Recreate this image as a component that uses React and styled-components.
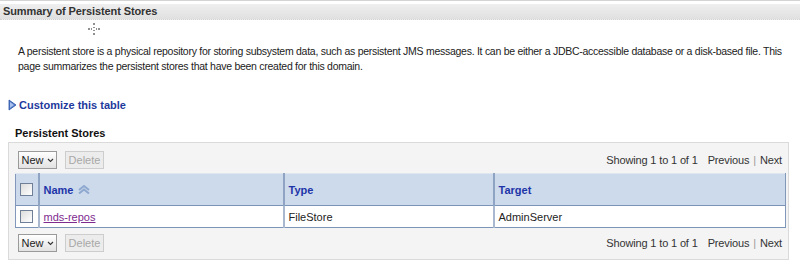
import React from "react";
import styled, { createGlobalStyle } from "styled-components";

const GlobalStyle = createGlobalStyle`
  body {
    margin: 0;
    background: #fff;
    font-family: "Liberation Sans", Arial, sans-serif;
    font-size: 11px;
    color: #333;
  }
`;

const Page = styled.div`
  position: relative;
  width: 800px;
  height: 278px;
  border-top: 1px solid #d4d4d4;
  box-sizing: border-box;
`;

const TitleBar = styled.div`
  margin-top: 3px;
  height: 15px;
  line-height: 15px;
  padding-left: 3px;
  background: linear-gradient(#efefef, #e0e0e0);
  border-bottom: 1px dotted #d3d3d3;
  font-weight: bold;
  font-size: 11px;
  letter-spacing: -0.1px;
  color: #333;
`;

const Cursor = styled.svg`
  position: absolute;
  left: 87px;
  top: 21px;
`;

const Description = styled.p`
  margin: 24px 14px 0 18px;
  line-height: 15px;
  font-size: 10.5px;
  letter-spacing: -0.27px;
  color: #222;
`;

const CustomizeLink = styled.a`
  display: flex;
  align-items: center;
  gap: 2px;
  margin: 24px 0 0 8px;
  height: 14px;
  font-weight: bold;
  font-size: 11px;
  color: #1d3a9c;
  text-decoration: none;
`;

const SectionTitle = styled.h3`
  margin: 14px 0 0 15px;
  height: 14px;
  line-height: 14px;
  font-size: 11px;
  font-weight: bold;
  color: #111;
`;

const Panel = styled.div`
  margin: 2px 11px 0 8px;
  border: 1px solid #dadada;
  background: #f4f4f4;
  padding: 8px 0 7px;
`;

const Toolbar = styled.div`
  display: flex;
  align-items: center;
  gap: 8px;
  padding: 0 6px 0 9px;
  margin: ${(p) => (p.$bottom ? "6px 0 0" : "0 0 4px")};
  height: 18px;
`;

const Button = styled.button`
  display: flex;
  align-items: center;
  justify-content: center;
  gap: 3px;
  width: 39px;
  height: 18px;
  padding: 0;
  font-family: inherit;
  font-size: 11px;
  border: 1px solid ${(p) => (p.disabled ? "#cdcdcd" : "#9a9a9a")};
  background: ${(p) =>
    p.disabled ? "#ececec" : "linear-gradient(#ffffff, #e2e2e2)"};
  color: ${(p) => (p.disabled ? "#a8a8a8" : "#222")};
`;

const Paging = styled.div`
  margin-left: auto;
  display: flex;
  align-items: center;
  letter-spacing: -0.15px;
  color: #333;
`;

const PageLink = styled.span`
  margin-left: ${(p) => p.$gap || 0}px;
`;

const Sep = styled.span`
  color: #999;
  margin: 0 4px;
`;

const Table = styled.table`
  margin: 0 3px 0 6px;
  width: 771px;
  table-layout: fixed;
  border-collapse: collapse;
  border: 1px solid #8198bb;
  border-top: 1px solid #dfe6f0;
`;

const HeadCell = styled.th`
  height: 31px;
  padding: 0 4px;
  text-align: left;
  background: #cddaec;
  color: #1d35a8;
  font-size: 11px;
  font-weight: bold;
  border-left: 2px solid #8fa3c2;
  border-bottom: 1px solid #7d94b9;
  &:first-child {
    border-left: none;
    text-align: center;
    padding: 0;
  }
`;

const Cell = styled.td`
  height: 21px;
  padding: 0 4px;
  background: #fff;
  color: #222;
  border-left: 2px solid #a9b8cf;
  border-bottom: 1px solid #7d94b9;
  &:first-child {
    border-left: none;
    text-align: center;
    padding: 0;
  }
`;

const HeadInner = styled.span`
  display: inline-flex;
  align-items: center;
  gap: 4px;
`;

const Check = styled.span`
  display: inline-block;
  width: 11px;
  height: 11px;
  border: 1px solid #6e7f97;
  background: linear-gradient(135deg, #dcdcdc, #ffffff);
  vertical-align: middle;
`;

const NameLink = styled.a`
  color: #7e2a8f;
  text-decoration: underline;
`;

function ExpandIcon() {
  return (
    <svg width="9" height="12" viewBox="0 0 9 12">
      <path d="M1 1 L8 6 L1 11 Z" fill="#4d74c4" stroke="#2d55a8" strokeWidth="0.8" strokeLinejoin="round" />
      <path d="M2 3 L6 6 L2 9 Z" fill="#a9c2ec" />
    </svg>
  );
}

function SortIcon() {
  return (
    <svg width="14" height="9" viewBox="0 0 14 9">
      <path d="M2 5 L7 1 L12 5" fill="none" stroke="#8ea8cf" strokeWidth="2" />
      <path d="M2 8.5 L7 4.5 L12 8.5" fill="none" stroke="#8ea8cf" strokeWidth="2" />
    </svg>
  );
}

function Caret() {
  return (
    <svg width="7" height="5" viewBox="0 0 7 5">
      <path d="M1 1 L3.5 3.5 L6 1" fill="none" stroke="#333" strokeWidth="1.1" />
    </svg>
  );
}

function Bar({ bottom }) {
  return (
    <Toolbar $bottom={bottom}>
      <Button>
        New <Caret />
      </Button>
      <Button disabled>Delete</Button>
      <Paging>
        <span>Showing 1 to 1 of 1</span>
        <PageLink $gap={10}>Previous</PageLink>
        <Sep>|</Sep>
        <PageLink>Next</PageLink>
      </Paging>
    </Toolbar>
  );
}

export default function App() {
  return (
    <Page>
      <GlobalStyle />
      <TitleBar>Summary of Persistent Stores</TitleBar>
      <Cursor width="14" height="14" viewBox="0 0 14 14">
        <path d="M7 1 V3 M7 5 V6 M7 8 V9 M7 11 V13 M1 7 H3 M4 7 H5 M9 7 H10 M11 7 H13" stroke="#222" strokeWidth="1" />
      </Cursor>
      <Description>
        A persistent store is a physical repository for storing subsystem data, such as persistent JMS messages. It can be either a JDBC-accessible database or a disk-based file. This page summarizes the persistent stores that have been created for this domain.
      </Description>
      <CustomizeLink href="#">
        <ExpandIcon />
        Customize this table
      </CustomizeLink>
      <SectionTitle>Persistent Stores</SectionTitle>
      <Panel>
        <Bar />
        <Table>
          <colgroup>
            <col style={{ width: 23 }} />
            <col style={{ width: 245 }} />
            <col style={{ width: 210 }} />
            <col />
          </colgroup>
          <thead>
            <tr>
              <HeadCell>
                <Check />
              </HeadCell>
              <HeadCell>
                <HeadInner>
                  Name <SortIcon />
                </HeadInner>
              </HeadCell>
              <HeadCell>Type</HeadCell>
              <HeadCell>Target</HeadCell>
            </tr>
          </thead>
          <tbody>
            <tr>
              <Cell>
                <Check />
              </Cell>
              <Cell>
                <NameLink href="#">mds-repos</NameLink>
              </Cell>
              <Cell>FileStore</Cell>
              <Cell>AdminServer</Cell>
            </tr>
          </tbody>
        </Table>
        <Bar bottom />
      </Panel>
    </Page>
  );
}
